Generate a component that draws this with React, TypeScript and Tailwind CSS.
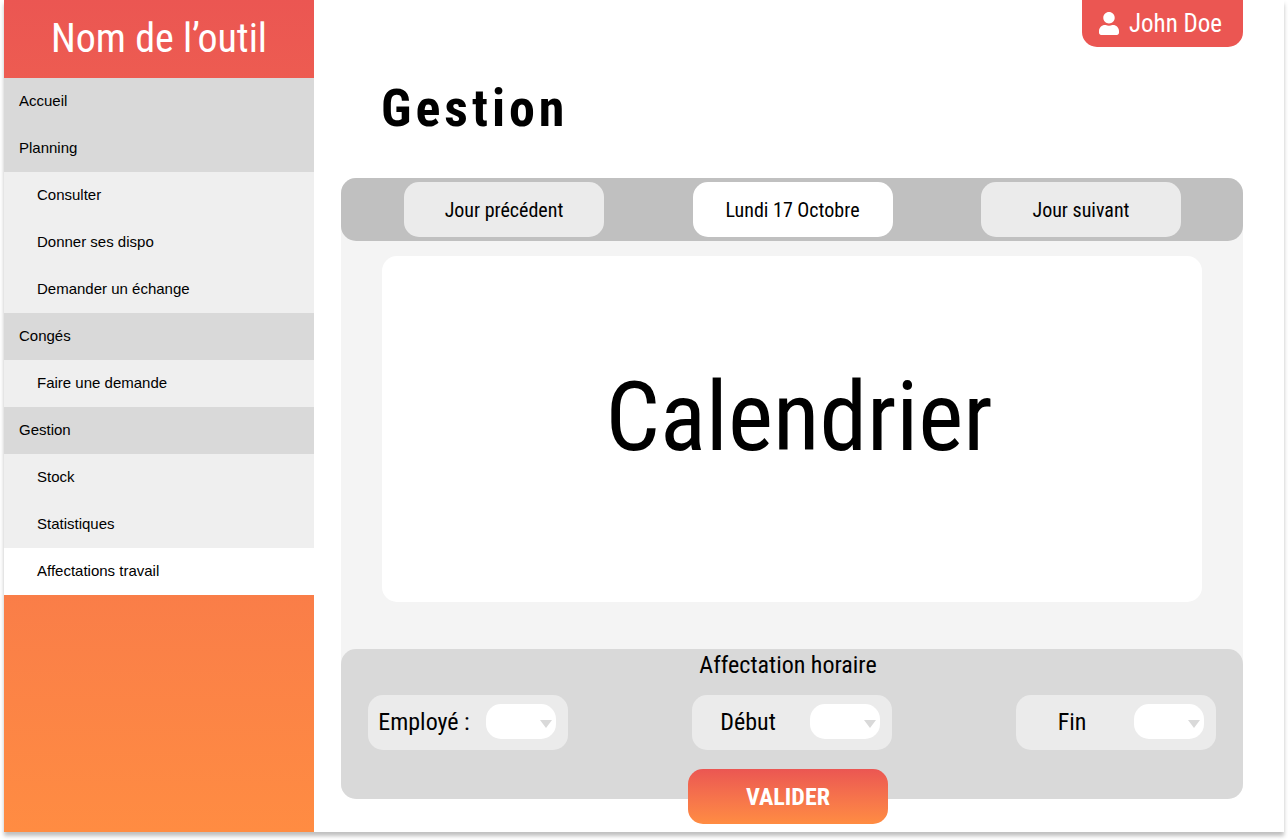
import { FaUser } from "react-icons/fa";

type NavItem = { label: string; level: 0 | 1; active?: boolean };

const navItems: NavItem[] = [
  { label: "Accueil", level: 0 },
  { label: "Planning", level: 0 },
  { label: "Consulter", level: 1 },
  { label: "Donner ses dispo", level: 1 },
  { label: "Demander un échange", level: 1 },
  { label: "Congés", level: 0 },
  { label: "Faire une demande", level: 1 },
  { label: "Gestion", level: 0 },
  { label: "Stock", level: 1 },
  { label: "Statistiques", level: 1 },
  { label: "Affectations travail", level: 1, active: true },
];

function navItemStyle(item: NavItem) {
  if (item.active) return "bg-white pl-[33px]";
  return item.level === 0 ? "bg-[#d9d9d9] pl-[15px]" : "bg-[#efefef] pl-[33px]";
}

function Sidebar() {
  return (
    <aside className="w-[310px] shrink-0 bg-linear-to-b from-[#eb5652] to-[#ff8c42]">
      <div className="flex h-[78px] items-center justify-center text-[40px] leading-[48px] text-white">
        Nom de l’outil
      </div>
      <nav className="font-['Liberation_Sans',Arial,sans-serif] text-[15px]">
        <ul>
          {navItems.map((item) => (
            <li key={item.label}>
              <a
                href="#"
                aria-current={item.active ? "page" : undefined}
                className={`flex h-[47px] items-center ${navItemStyle(item)}`}
              >
                {item.label}
              </a>
            </li>
          ))}
        </ul>
      </nav>
    </aside>
  );
}

function DayButton({ children, current = false }: { children: string; current?: boolean }) {
  return (
    <button
      type="button"
      className={`h-[55px] w-[200px] rounded-[15px] text-xl ${current ? "bg-white" : "bg-[#ebebeb]"}`}
    >
      {children}
    </button>
  );
}

function SelectField({ id, label }: { id: string; label: string }) {
  return (
    <div className="flex h-[55px] w-[200px] items-center rounded-[15px] bg-[#ebebeb] pr-3 pb-[2px]">
      <label htmlFor={id} className="flex-1 pr-[6px] text-center text-2xl">
        {label}
      </label>
      <div className="relative">
        <select id={id} className="block h-[35px] w-[70px] appearance-none rounded-[15px] bg-white px-3">
          <option value=""></option>
        </select>
        <svg
          viewBox="0 0 12 8"
          className="pointer-events-none absolute top-4 right-1 h-2 w-3 fill-[#d9d9d9]"
          aria-hidden="true"
        >
          <path d="M0 0h12L6 8z" />
        </svg>
      </div>
    </div>
  );
}

export default function App() {
  return (
    <div className="px-1 pb-2 font-['Roboto_Condensed',Roboto,sans-serif] text-black">
      <div className="flex min-h-[calc(100vh-8px)] bg-white shadow-[0_4px_4px_rgba(0,0,0,0.25)]">
        <Sidebar />
        <main className="min-w-0 flex-1 pr-[41px] pb-2 pl-[27px]">
          <header className="flex justify-between">
            <h1 className="mt-[78px] mb-[38px] ml-10 text-[52px] leading-[62px] font-bold tracking-[4px]">Gestion</h1>
            <button
              type="button"
              className="flex h-[47px] w-[161px] items-center justify-center gap-[10px] rounded-b-[15px] bg-[#eb5652] pr-1 text-[25px] text-white"
            >
              <FaUser className="h-[23px] w-5" aria-hidden="true" />
              John Doe
            </button>
          </header>

          <div className="rounded-[15px] bg-[#f4f4f4]">
            <div className="flex h-[63px] items-center justify-between rounded-[15px] bg-[#c0c0c0] pr-[62px] pl-[63px]">
              <DayButton>Jour précédent</DayButton>
              <DayButton current>Lundi 17 Octobre</DayButton>
              <DayButton>Jour suivant</DayButton>
            </div>

            <section className="mx-[41px] mt-[15px] mb-[47px] flex h-[346px] items-center justify-center rounded-[15px] bg-white pb-6 pl-[14px] text-[96px]">
              Calendrier
            </section>

            <form className="rounded-[15px] bg-[#d9d9d9] px-[27px]">
              <h2 className="pr-2 text-center text-2xl">Affectation horaire</h2>
              <div className="mt-[14px] flex justify-between">
                <SelectField id="employe" label="Employé :" />
                <SelectField id="debut" label="Début" />
                <SelectField id="fin" label="Fin" />
              </div>
              <div className="mt-[19px] flex justify-center pr-2">
                <button
                  type="submit"
                  className="-mb-[25px] h-[55px] w-[200px] rounded-[15px] bg-linear-to-b from-[#eb5652] to-[#ff8c42] text-2xl font-bold text-white"
                >
                  VALIDER
                </button>
              </div>
            </form>
          </div>
        </main>
      </div>
    </div>
  );
}
